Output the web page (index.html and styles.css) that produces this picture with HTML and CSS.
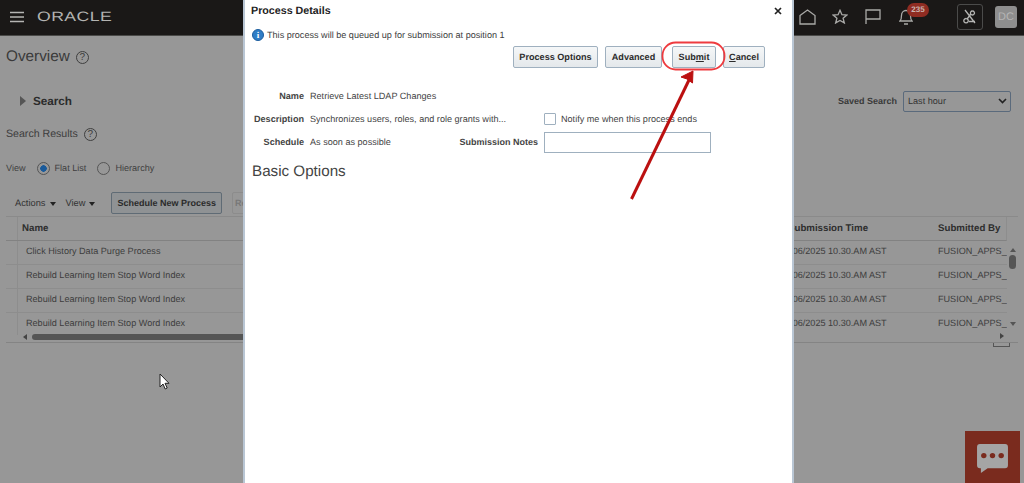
FILE: index.html
```html
<!DOCTYPE html>
<html lang="en">
<head>
<meta charset="utf-8">
<title>Process Details</title>
<link rel="stylesheet" href="styles.css">
</head>
<body>
<div class="page">
  <header class="topbar">
    <div class="brand">
      <svg class="menu" width="16" height="12" viewBox="0 0 16 12"><path d="M1 1.500h14M1 6h14M1 10.500h14" stroke="#b5b5b3" stroke-width="1.400" fill="none"/></svg>
      <span class="logo">ORACLE</span>
    </div>
    <div class="tools">
      <svg width="17" height="16" viewBox="0 0 17 16"><path d="M1 6.500 8.500 1 16 6.500V15H1z" fill="none" stroke="#a9a9a7" stroke-width="1.300"/></svg>
      <svg class="star" width="16" height="15" viewBox="0 0 18 17"><path d="M9 1.500l2.200 5 5.500.4-4.200 3.600 1.400 5.300L9 13l-4.900 2.800 1.400-5.300L1.300 6.900l5.500-.4z" fill="none" stroke="#a9a9a7" stroke-width="1.500"/></svg>
      <svg class="flag" width="16" height="15" viewBox="0 0 16 15"><path d="M1 15V1h14v9H1" fill="none" stroke="#a9a9a7" stroke-width="1.300"/></svg>
      <div class="bell">
        <svg width="14" height="16" viewBox="0 0 14 16"><path d="M1 12c1.500-1.500 1.500-3 1.500-5.500 0-3 2-5 4.500-5s4.500 2 4.500 5c0 2.500 0 4 1.500 5.500zM5 15h4" fill="none" stroke="#a9a9a7" stroke-width="1.300"/></svg>
        <span class="badge">235</span>
      </div>
      <div class="mute">
        <svg width="14" height="15" viewBox="0 0 14 15"><path d="M2 1l10 13M9.500 2a2 2 0 1 1-.1 0M7.500 5.500 4.500 9.500M3 9.500a2.200 2.200 0 1 0 .1 0M6 12.500h6" fill="none" stroke="#b5b5b3" stroke-width="1.300"/></svg>
      </div>
      <div class="avatar">DC</div>
    </div>
  </header>

  <main class="content">
    <div class="title-row"><h1>Overview</h1><span class="help big">?</span></div>
    <div class="search-row">
      <div class="search-head"><i class="tri"></i><strong>Search</strong></div>
      <div class="saved">
        <b>Saved Search</b>
        <div class="select"><span>Last hour</span><svg width="9" height="6" viewBox="0 0 9 6"><path d="M1 1l3.500 3.500L8 1" fill="none" stroke="#222" stroke-width="1.600"/></svg></div>
      </div>
    </div>
    <div class="title-row results"><h2>Search Results</h2><span class="help">?</span></div>
    <div class="view-row">
      <span>View</span>
      <i class="radio on"></i><span>Flat List</span>
      <i class="radio"></i><span>Hierarchy</span>
    </div>
    <div class="toolbar">
      <span class="menu-item">Actions<i class="down"></i></span>
      <span class="menu-item">View<i class="down"></i></span>
      <span class="bg-btn">Schedule New Process</span>
      <span class="bg-btn off">Re</span>
    </div>

    <div class="table">
      <div class="row head"><span class="gutter"></span><span class="c-name">Name</span><span class="c-time">Submission Time</span><span class="c-by">Submitted By</span></div>
      <div class="row"><span class="gutter"></span><span class="c-name">Click History Data Purge Process</span><span class="c-time">02/06/2025 10.30.AM AST</span><span class="c-by">FUSION_APPS_ESS</span></div>
      <div class="row"><span class="gutter"></span><span class="c-name">Rebuild Learning Item Stop Word Index</span><span class="c-time">02/06/2025 10.30.AM AST</span><span class="c-by">FUSION_APPS_ESS</span></div>
      <div class="row"><span class="gutter"></span><span class="c-name">Rebuild Learning Item Stop Word Index</span><span class="c-time">02/06/2025 10.30.AM AST</span><span class="c-by">FUSION_APPS_ESS</span></div>
      <div class="row last"><span class="gutter"></span><span class="c-name">Rebuild Learning Item Stop Word Index</span><span class="c-time">02/06/2025 10.30.AM AST</span><span class="c-by">FUSION_APPS_ESS</span></div>
      <div class="hscroll"><i class="arrow-left"></i><i class="thumb"></i></div>
      <i class="vthumb"></i>
      <i class="up"></i><i class="dn"></i><i class="rt"></i><i class="corner"></i>
    </div>
  </main>
</div>

<svg class="cursor" width="12" height="17" viewBox="0 0 12 17"><path d="M1 1v13l3-3 2.200 5 2-1-2.200-4.700H10z" fill="#fff" stroke="#222" stroke-width="1"/></svg>

<div class="chat">
  <svg width="31" height="29" viewBox="0 0 32 30"><path d="M3 0h26a3 3 0 0 1 3 3v19a3 3 0 0 1-3 3H11l-7 5v-5H3a3 3 0 0 1-3-3V3a3 3 0 0 1 3-3z" fill="#a5a5a5"/><circle cx="7" cy="12" r="2.800" fill="#7a2b1e"/><circle cx="16" cy="12" r="2.800" fill="#7a2b1e"/><circle cx="25" cy="12" r="2.800" fill="#7a2b1e"/></svg>
</div>

<section class="dialog">
  <div class="dlg-title"><strong>Process Details</strong><svg class="close" width="8" height="8" viewBox="0 0 8 8"><path d="M1 1l6 6M7 1 1 7" stroke="#222" stroke-width="1.700" fill="none"/></svg></div>
  <div class="info"><i class="info-icon">i</i><span>This process will be queued up for submission at position 1</span></div>
  <div class="actions">
    <button class="btn wide">Process Options</button>
    <button class="btn adv">Advanced</button>
    <button class="btn sub">Sub<u>m</u>it</button>
    <button class="btn can"><u>C</u>ancel</button>
  </div>
  <div class="form">
    <div class="col-left">
      <div class="field"><label>Name</label><span>Retrieve Latest LDAP Changes</span></div>
      <div class="field"><label>Description</label><span>Synchronizes users, roles, and role grants with...</span></div>
      <div class="field"><label>Schedule</label><span>As soon as possible</span></div>
    </div>
    <div class="col-right">
      <div class="notify"><i class="check"></i><span>Notify me when this process ends</span></div>
      <div class="notes"><label>Submission Notes</label><i class="input"></i></div>
    </div>
  </div>
  <h3>Basic Options</h3>
</section>

<svg class="annot" width="1024" height="483" viewBox="0 0 1024 483">
  <rect x="662.500" y="42.500" width="62" height="27" rx="13" fill="none" stroke="#ee3b3f" stroke-width="1.800"/>
  <path d="M631.500 199 689 80" stroke="#bb1010" stroke-width="3" fill="none"/>
  <path d="M693 71 681 77 687 79 692.500 83z" fill="#bb1010" stroke="#bb1010" stroke-width="1"/>
</svg>
</body>
</html>
```

FILE: styles.css
```css
* { box-sizing: border-box; }
html, body { margin: 0; height: 483px; overflow: hidden; }
body { position: relative; background: #979797; font: 9.1px "Liberation Sans", Arial, sans-serif; color: #333; text-rendering: geometricPrecision; }
i { display: block; font-style: normal; }

.page { width: 1024px; height: 483px; display: flex; flex-direction: column; }

.topbar { height: 36px; flex: none; background: #1a1817; display: flex; justify-content: space-between; align-items: center; padding: 0 7px 2px 9px; border-bottom: 1px solid #4a4a48; }
.brand { display: flex; align-items: center; gap: 12px; }
.menu { display: block; }
.logo { font-size: 13.5px; color: #b3b3b1; letter-spacing: 0.3px; transform: scaleX(1.31); transform-origin: left; }
.tools { display: flex; align-items: center; }
.tools > svg { display: block; }
.star { margin-left: 16px; }
.flag { margin-left: 17px; }
.bell { position: relative; margin-left: 18px; height: 16px; }
.bell svg { display: block; }
.badge { position: absolute; left: 8px; top: -6px; width: 22px; height: 14px; border-radius: 7px; background: #8f2c22; color: #c9b3af; font-size: 8px; font-weight: bold; text-align: center; line-height: 14px; }
.mute { margin-left: 44px; width: 26px; height: 26px; border: 1px solid #4b4b4a; border-radius: 3px; display: flex; align-items: center; justify-content: center; }
.avatar { margin-left: 12px; width: 22px; height: 22px; border-radius: 3px; background: #8e8e8e; color: #b5b5b5; font-size: 11px; display: flex; align-items: center; justify-content: center; }

.content { flex: 1; padding: 0 6px 0 6px; position: relative; }
.title-row { display: flex; align-items: center; gap: 6px; }
.title-row:first-child { margin-top: 10px; height: 22px; }
h1 { margin: 0; font-size: 15.3px; font-weight: normal; color: #3a3a3a; }
h2 { margin: 0; font-size: 10.6px; font-weight: normal; color: #3d3d3d; }
.help { width: 13px; height: 13px; border: 1px solid #3f3f3f; border-radius: 50%; font-size: 10px; text-align: center; line-height: 11px; color: #3f3f3f; }

.search-row { display: flex; justify-content: space-between; align-items: center; margin-top: 22px; height: 22px; padding: 0 7px 0 14px; }
.search-head { display: flex; align-items: center; gap: 7px; }
.search-head strong { font-size: 11.7px; color: #2b2b2b; }
.tri { width: 0; height: 0; border-left: 6px solid #555; border-top: 5px solid transparent; border-bottom: 5px solid transparent; }
.saved { display: flex; align-items: center; gap: 6px; }
.saved b { font-size: 9px; color: #3a3a3a; }
.select { width: 108px; height: 21px; border: 1px solid #5a6a7c; border-radius: 2px; display: flex; align-items: center; justify-content: space-between; padding: 0 3px 0 4px; color: #333; font-size: 9.1px; }

.results { margin-top: 14px; height: 16px; }
.view-row { display: flex; align-items: center; margin-top: 18px; height: 16px; color: #3f3f3f; }
.radio { width: 13px; height: 13px; border: 1px solid #555; border-radius: 50%; margin: 0 5px 0 11px; }
.radio.on { background: radial-gradient(circle, #1a5a9a 0 3px, transparent 3.5px); }

.toolbar { display: flex; align-items: center; margin: 16px 0 0 9px; height: 22px; color: #333; font-size: 9.3px; }
.menu-item { display: flex; align-items: center; gap: 4px; margin-right: 10px; }
.down { width: 0; height: 0; border-top: 4px solid #222; border-left: 3.5px solid transparent; border-right: 3.5px solid transparent; margin-top: 1px; }
.bg-btn { height: 22px; padding: 0 5px; margin-left: 6px; border: 1px solid #5f6b75; border-radius: 2px; background: #8f9294; font-weight: bold; font-size: 9px; color: #2a2a2a; display: flex; align-items: center; }
.bg-btn.off { border-color: #8c8c8c; background: #979797; color: #777; margin-left: 10px; padding: 0 2px 0 2px; width: 30px; }

.table { position: relative; margin-top: 2px; width: 1012px; border-top: 1px solid #8a8a8a; }
.row { display: grid; grid-template-columns: 12px 1fr 148px 69px; width: 1001px; height: 24px; align-items: center; padding-bottom: 3px; border-bottom: 1px solid #8d8d8d; color: #3d3d3d; }
.row.head { height: 24px; padding-bottom: 0; font-weight: bold; font-size: 9.7px; color: #2e2e2e; border-bottom-color: #828282; border-right: 1px solid #8d8d8d; }
.row.last { height: 19px; padding-bottom: 0; border-bottom: 0; align-items: start; }
.row.last > span:not(.gutter) { padding-top: 5px; }
.row > span { white-space: nowrap; overflow: hidden; }
.gutter { align-self: stretch; border-right: 1px solid #8d8d8d; margin-bottom: -3px; }
.head .gutter { margin-bottom: 0; }
.c-name { padding-left: 8px; }
.head .c-name { padding-left: 4px; }
.row > .c-time { text-indent: -10px; overflow: visible; }
.head > .c-time { text-indent: -1px; }
.head > .c-by { padding-left: 1px; }
.hscroll { height: 11px; display: flex; align-items: center; border-bottom: 1px solid #848484; padding-left: 17px; }
.arrow-left { width: 0; height: 0; border-right: 4px solid #444; border-top: 3px solid transparent; border-bottom: 3px solid transparent; }
.thumb { width: 300px; height: 6px; margin-left: 5px; border-radius: 3px; background: #555; }
.vthumb { position: absolute; right: 2px; top: 38px; width: 7px; height: 14px; border-radius: 3.5px; background: #555; }
.up, .dn, .rt { position: absolute; width: 0; height: 0; }
.up { right: 2px; top: 31px; border-bottom: 4px solid #555; border-left: 3px solid transparent; border-right: 3px solid transparent; }
.dn { right: 2px; top: 105px; border-top: 4px solid #555; border-left: 3px solid transparent; border-right: 3px solid transparent; }
.rt { right: 14px; top: 116px; border-left: 4px solid #444; border-top: 3px solid transparent; border-bottom: 3px solid transparent; }
.corner { position: absolute; right: 8px; top: 126px; width: 17px; height: 4px; border: 1px solid #555; border-top: 0; }

.cursor { position: absolute; left: 159px; top: 373px; }
.chat { position: absolute; left: 965px; top: 431px; width: 55px; height: 52px; background: #7a2b1e; display: flex; justify-content: center; padding-top: 13px; }
.chat svg { display: block; }

.dialog { position: absolute; left: 243px; top: 0; width: 551px; height: 483px; background: #fff; border-left: 2px solid #b9c6d4; border-right: 2px solid #b9c6d4; padding: 0 10px 0 6px; color: #444; }
.dlg-title { display: flex; justify-content: space-between; align-items: center; height: 21px; }
.dlg-title strong { font-size: 10.7px; color: #222; }
.close { display: block; }
.info { display: flex; align-items: center; gap: 3px; height: 16px; margin: 6px 0 0 1px; font-size: 9.1px; color: #3d3d3d; }
.info-icon { width: 12px; height: 12px; border-radius: 50%; background: #2f7dc6; border: 1px solid #1c5d9e; color: #fff; font: bold 9px/10px "Liberation Serif", serif; text-align: center; }
.actions { display: flex; justify-content: flex-end; height: 22px; margin-top: 3px; padding-right: 17px; }
.btn { height: 22px; margin: 0 0 0 7px; padding: 0; border: 1px solid #9fb0bf; border-radius: 2px; background: linear-gradient(#f5f7f8, #e4e8eb); font: bold 9.1px "Liberation Sans", Arial, sans-serif; color: #2c2c2c; white-space: nowrap; text-rendering: geometricPrecision; }
.btn.wide { width: 85px; }
.btn.adv { width: 57px; }
.btn.sub { width: 44px; margin-left: 10px; }
.btn.can { width: 42px; }
.form { display: flex; margin-top: 16px; }
.col-left { width: 293px; }
.field { display: flex; align-items: center; height: 23px; font-size: 9.1px; color: #444; }
.field label { width: 53px; margin-right: 6px; text-align: right; font-weight: bold; color: #444; flex: none; }
.col-right { margin-top: 28px; }
.notify { display: flex; align-items: center; gap: 5px; height: 14px; font-size: 9.1px; color: #444; }
.check { width: 12px; height: 12px; border: 1px solid #9fb0bf; border-radius: 1px; flex: none; }
.notes { position: relative; margin-top: 6px; height: 21px; }
.notes label { position: absolute; right: 100%; margin-right: 6px; top: 5px; white-space: nowrap; font-size: 9px; font-weight: bold; color: #444; }
.input { width: 167px; height: 21px; border: 1px solid #9fb0bf; }
h3 { margin: 10px 0 0 1px; font-size: 15.2px; font-weight: normal; color: #444; }

.annot { position: absolute; left: 0; top: 0; pointer-events: none; }
```
